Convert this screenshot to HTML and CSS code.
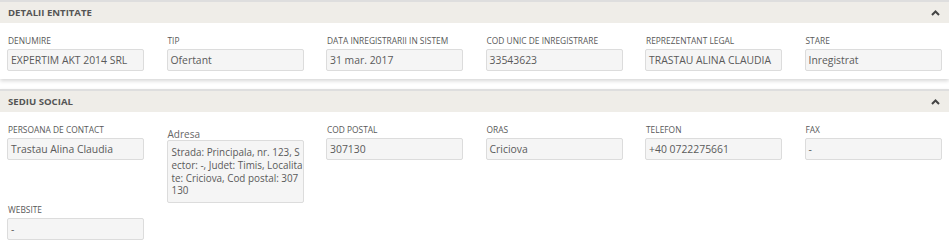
FILE: index.html
```html
<!DOCTYPE html>
<html lang="ro">
<head>
    <meta charset="UTF-8">
    <meta name="viewport" content="width=device-width, initial-scale=1.0">
    <title>Detalii entitate</title>
    <link rel="stylesheet" href="styles.css">
</head>
<body>
    <div class="panel">
        <div class="panel-heading">
            <div class="panel-title">Detalii entitate</div>
            <svg class="chevron" width="9" height="6" viewBox="0 0 9 6"><polyline points="1,5 4.5,1.5 8,5" /></svg>
        </div>
        <div class="panel-body">
            <div class="field">
                <div class="field-label">Denumire</div>
                <div class="field-value">EXPERTIM AKT 2014 SRL</div>
            </div>
            <div class="field">
                <div class="field-label">Tip</div>
                <div class="field-value">Ofertant</div>
            </div>
            <div class="field">
                <div class="field-label">Data inregistrarii in sistem</div>
                <div class="field-value">31 mar. 2017</div>
            </div>
            <div class="field">
                <div class="field-label">Cod unic de inregistrare</div>
                <div class="field-value">33543623</div>
            </div>
            <div class="field">
                <div class="field-label">Reprezentant legal</div>
                <div class="field-value">TRASTAU ALINA CLAUDIA</div>
            </div>
            <div class="field">
                <div class="field-label">Stare</div>
                <div class="field-value">Inregistrat</div>
            </div>
        </div>
    </div>

    <div class="panel">
        <div class="panel-heading">
            <div class="panel-title">Sediu social</div>
            <svg class="chevron" width="9" height="6" viewBox="0 0 9 6"><polyline points="1,5 4.5,1.5 8,5" /></svg>
        </div>
        <div class="panel-body">
            <div class="field">
                <div class="field-label">Persoana de contact</div>
                <div class="field-value">Trastau Alina Claudia</div>
            </div>
            <div class="field field-address">
                <div class="address-label">Adresa</div>
                <div class="field-value address-value">Strada: Principala, nr. 123, Sector: -, Judet: Timis, Localitate: Criciova, Cod postal: 307130</div>
            </div>
            <div class="field">
                <div class="field-label">Cod postal</div>
                <div class="field-value">307130</div>
            </div>
            <div class="field">
                <div class="field-label">Oras</div>
                <div class="field-value">Criciova</div>
            </div>
            <div class="field">
                <div class="field-label">Telefon</div>
                <div class="field-value">+40 0722275661</div>
            </div>
            <div class="field">
                <div class="field-label">Fax</div>
                <div class="field-value">-</div>
            </div>
            <div class="field">
                <div class="field-label">Website</div>
                <div class="field-value">-</div>
            </div>
        </div>
    </div>
</body>
</html>
```

FILE: styles.css
```css
* {
    margin: 0;
    padding: 0;
    box-sizing: border-box;
}

body {
    background-color: #fff;
    font-family: 'Open Sans', 'Liberation Sans', sans-serif;
    color: #555;
}

.panel {
    background-color: #fff;
    border-top: 2px solid #dedede;
    box-shadow: 0 2px 4px rgba(0,0,0,0.16);
    margin-bottom: 10px;
}

.panel-heading {
    display: flex;
    justify-content: space-between;
    align-items: center;
    height: 21px;
    padding: 0 9px 0 8px;
    background-color: #efede8;
}

.panel-title {
    font-size: 9.6px;
    font-weight: bold;
    text-transform: uppercase;
    color: #555;
}

.chevron polyline {
    fill: none;
    stroke: #444;
    stroke-width: 2;
}

.panel-body {
    display: grid;
    grid-template-columns: repeat(6, 137px);
    column-gap: 22.5px;
    row-gap: 2px;
    padding: 13px 7px 8px 7px;
}

.field-label {
    font-size: 8.4px;
    line-height: 10px;
    text-transform: uppercase;
    padding-left: 1px;
    margin-bottom: 3px;
    color: #595959;
}

.field-value {
    height: 22px;
    line-height: 20px;
    padding: 0 3px;
    font-size: 10.4px;
    color: #5a5a5a;
    background-color: #f5f5f5;
    border: 1px solid #dcdcdc;
    border-radius: 2px;
}

.field-address {
    padding-top: 3px;
}

.address-label {
    font-size: 10px;
    line-height: 12px;
    padding-left: 1px;
    color: #666;
}

.address-value {
    height: auto;
    font-size: 9.9px;
    line-height: 12.8px;
    padding: 5px 0 5px 4px;
    word-break: break-all;
}
```
